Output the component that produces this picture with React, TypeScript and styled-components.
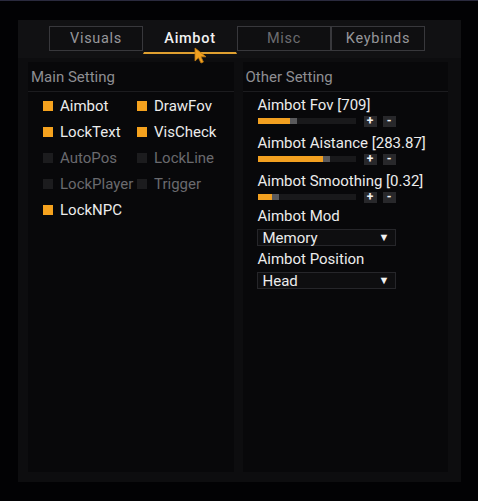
import React from 'react';
import styled, { createGlobalStyle } from 'styled-components';

const GlobalStyle = createGlobalStyle`
  html, body {
    margin: 0;
    padding: 0;
    background: #020204;
    font-family: Roboto, "Liberation Sans", sans-serif;
  }
`;

interface Toggle {
  label: string;
  on: boolean;
}

const toggles: Toggle[] = [
  { label: 'Aimbot', on: true },
  { label: 'DrawFov', on: true },
  { label: 'LockText', on: true },
  { label: 'VisCheck', on: true },
  { label: 'AutoPos', on: false },
  { label: 'LockLine', on: false },
  { label: 'LockPlayer', on: false },
  { label: 'Trigger', on: false },
  { label: 'LockNPC', on: true },
];

const sliders = [
  { label: 'Aimbot Fov [709]', fill: 32 },
  { label: 'Aimbot Aistance [283.87]', fill: 65 },
  { label: 'Aimbot Smoothing [0.32]', fill: 14 },
];

const selects = [
  { label: 'Aimbot Mod', value: 'Memory' },
  { label: 'Aimbot Position', value: 'Head' },
];

const tabs = ['Visuals', 'Aimbot', 'Misc', 'Keybinds'];

const App: React.FC = () => {
  return (
    <Page>
      <GlobalStyle />
      <Window>
        <TabBar>
          {tabs.map((t) => (
            <Tab key={t} active={t === 'Aimbot'} dim={t === 'Misc'}>
              {t}
              {t === 'Aimbot' && (
                <Cursor width="14" height="17" viewBox="0 0 14 17">
                  <path d="M1 1 L1 14 L4.5 10.8 L7 16 L9.4 15 L7 9.8 L12 9.8 Z" fill="#f0a020" stroke="#c07a10" strokeWidth="0.8" />
                </Cursor>
              )}
            </Tab>
          ))}
        </TabBar>

        <Panels>
          <Panel>
            <PanelHeader>Main Setting</PanelHeader>
            <CheckGrid>
              {toggles.map((c) => (
                <CheckItem key={c.label} on={c.on}>
                  <Box on={c.on} />
                  {c.label}
                </CheckItem>
              ))}
            </CheckGrid>
          </Panel>

          <Panel>
            <PanelHeader>Other Setting</PanelHeader>
            <Settings>
              {sliders.map((s) => (
                <SliderItem key={s.label}>
                  <Label>{s.label}</Label>
                  <SliderRow>
                    <Track>
                      <Fill style={{ width: s.fill }} />
                      <Knob />
                    </Track>
                    <StepButton>+</StepButton>
                    <StepButton>-</StepButton>
                  </SliderRow>
                </SliderItem>
              ))}
              {selects.map((s) => (
                <SelectItem key={s.label}>
                  <Label>{s.label}</Label>
                  <Select>
                    {s.value}
                    <Arrow>▼</Arrow>
                  </Select>
                </SelectItem>
              ))}
            </Settings>
          </Panel>
        </Panels>
      </Window>
    </Page>
  );
};

export default App;

const Page = styled.div`
  width: 478px;
  height: 501px;
  box-sizing: border-box;
  border-top: 1px solid #2a2a3e;
  padding: 19px 0 0 18px;
`;

const Window = styled.div`
  width: 443px;
  height: 462px;
  background: #0d0d0f;
  display: flex;
  flex-direction: column;
`;

const TabBar = styled.div`
  height: 38px;
  background: #111113;
  display: flex;
  align-items: flex-start;
  padding: 6px 0 0 31px;
  box-sizing: border-box;
`;

const Tab = styled.div<{ active?: boolean; dim?: boolean }>`
  position: relative;
  width: 94px;
  box-sizing: border-box;
  display: flex;
  align-items: center;
  justify-content: center;
  font-size: 14.5px;
  letter-spacing: 0.7px;
  font-weight: ${(p) => (p.active ? 500 : 400)};
  color: ${(p) => (p.active ? '#f2f2f2' : p.dim ? '#6c6c70' : '#96969a')};
  background: ${(p) => (p.active ? 'transparent' : '#0f0f11')};
  border: 1px solid ${(p) => (p.active ? 'transparent' : '#38383c')};
  border-bottom: ${(p) => (p.active ? '2px solid #e0a030' : '1px solid #38383c')};
  height: ${(p) => (p.active ? '28px' : '25px')};
  padding-bottom: ${(p) => (p.active ? '3px' : '0')};
`;

const Cursor = styled.svg`
  position: absolute;
  left: 50px;
  top: 20px;
`;

const Panels = styled.div`
  display: flex;
  gap: 9px;
  padding: 4px 13px 10px 10px;
  flex: 1;
`;

const Panel = styled.div`
  flex: 1;
  background: #08080a;
  display: flex;
  flex-direction: column;
`;

const PanelHeader = styled.div`
  height: 29px;
  line-height: 31px;
  padding-left: 3px;
  font-size: 15px;
  color: #8e8e92;
  border-bottom: 1px solid #1c1c1f;
`;

const CheckGrid = styled.div`
  display: grid;
  grid-template-columns: 94px 1fr;
  row-gap: 8px;
  padding: 5px 0 0 15px;
`;

const CheckItem = styled.div<{ on: boolean }>`
  display: flex;
  align-items: center;
  gap: 7px;
  height: 18px;
  font-size: 15px;
  white-space: nowrap;
  color: ${(p) => (p.on ? '#ececec' : '#6a6a6e')};
`;

const Box = styled.span<{ on: boolean }>`
  width: 10px;
  height: 10px;
  flex-shrink: 0;
  background: ${(p) => (p.on ? '#f5a21e' : '#1c1c1e')};
`;

const Settings = styled.div`
  display: flex;
  flex-direction: column;
  padding: 4px 0 0 15px;
`;

const Label = styled.div`
  height: 18px;
  line-height: 18px;
  font-size: 15px;
  color: #ececec;
  white-space: nowrap;
`;

const SliderItem = styled.div`
  margin-bottom: 6px;
`;

const SliderRow = styled.div`
  display: flex;
  align-items: center;
  height: 14px;
`;

const Track = styled.div`
  width: 98px;
  height: 6px;
  background: #19191b;
  display: flex;
  margin-right: 8px;
`;

const Fill = styled.div`
  height: 100%;
  background: #f2a020;
`;

const Knob = styled.div`
  width: 7px;
  height: 100%;
  background: #5a5a5c;
`;

const StepButton = styled.div`
  width: 13px;
  height: 11px;
  margin-right: 6px;
  background: #28282b;
  color: #f0f0f0;
  font-size: 12px;
  line-height: 11px;
  text-align: center;
  font-weight: bold;
`;

const SelectItem = styled.div`
  margin-top: -3px;
  margin-bottom: 7px;
`;

const Select = styled.div`
  width: 139px;
  height: 17px;
  box-sizing: border-box;
  margin-top: 4px;
  margin-left: -1px;
  border: 1px solid #26262a;
  background: #0e0e10;
  display: flex;
  align-items: center;
  justify-content: space-between;
  padding: 0 5px;
  font-size: 15px;
  color: #ececec;
`;

const Arrow = styled.span`
  font-size: 11px;
  color: #f0f0f0;
`;
